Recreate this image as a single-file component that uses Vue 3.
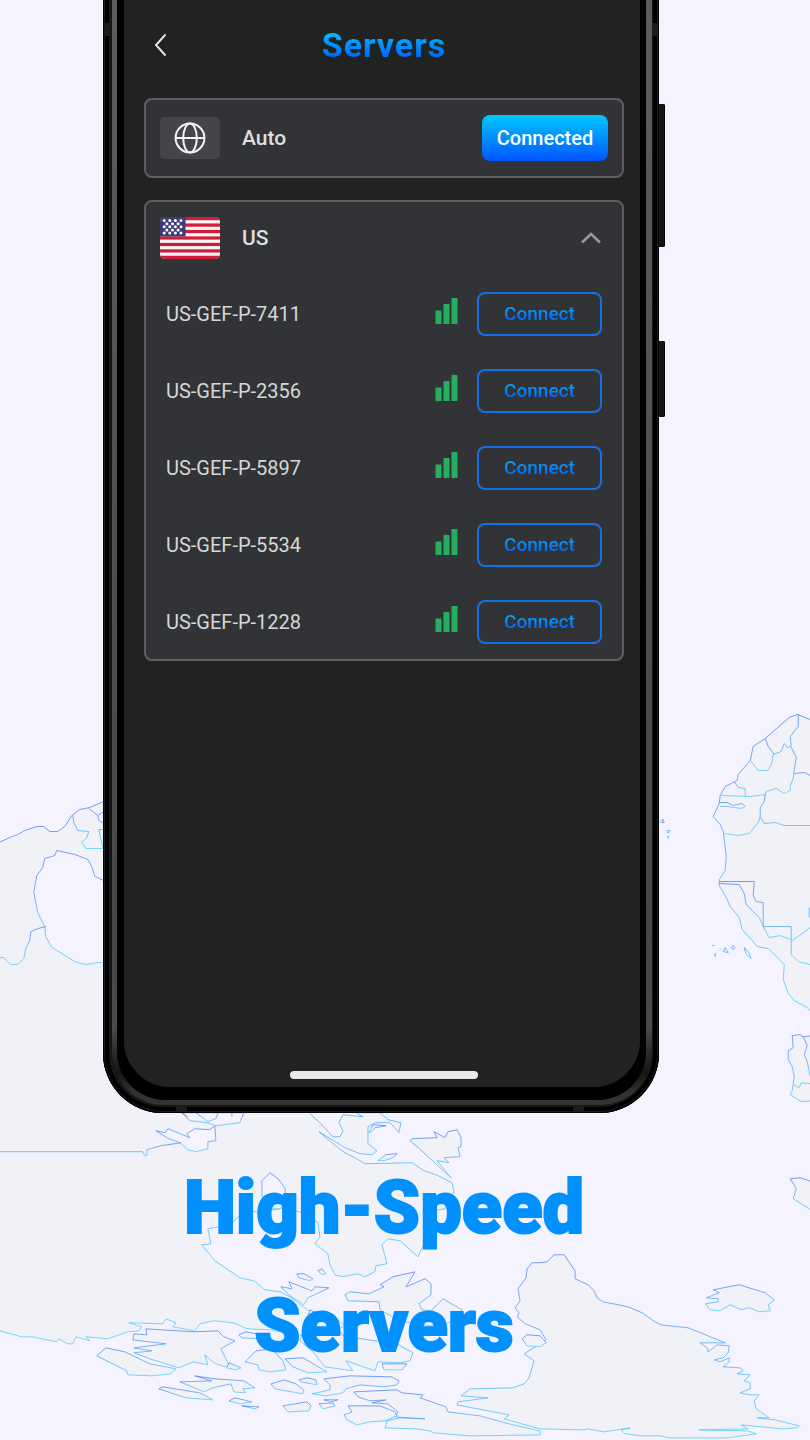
<script setup>
import { ref } from 'vue'

const open = ref(true)

const servers = [
    'US-GEF-P-7411',
    'US-GEF-P-2356',
    'US-GEF-P-5897',
    'US-GEF-P-5534',
    'US-GEF-P-1228'
]

// rows of the flag's canton, every second row is shifted
const stars = []
for (let row = 0; row < 5; row++) {
    const count = row % 2 ? 3 : 4
    for (let i = 0; i < count; i++) {
        stars.push({ x: (row % 2 ? 6.9 : 4.2) + i * 5.6, y: 3.6 + row * 3.1 })
    }
}

const land = [
    // big continent on the left
    'M-5 844 10 837 18 834 25 830 37 826 44 826 50 831 58 831 65 826 72 815 80 809 90 807 104 801 300 850 310 1113 320 1122 333 1136 340 1136 343 1130 339 1122 343 1114 363 1116 356 1112 380 1112 388 1119 401 1122 399 1132 390 1122 375 1122 368 1126 368 1143 377 1150 372 1154 360 1153 345 1147 319 1131 333 1143 345 1152 355 1157 365 1163 412 1162 424 1170 436 1174 452 1182 454 1191 445 1208 434 1210 430 1230 418 1256 400 1240 388 1238 382 1244 387 1263 376 1265 375 1271 365 1276 358 1273 342 1276 335 1274 330 1264 328 1253 315 1243 320 1236 318 1222 302 1212 286 1207 262 1211 244 1211 228 1226 220 1226 208 1228 211 1243 202 1244 215 1260 240 1277 254 1280 265 1289 280 1291 290 1296 309 1310 333 1315 345 1325 320 1338 270 1329 247 1328 234 1322 214 1320 200 1323 195 1330 173 1326 176 1322 166 1318 163 1323 129 1322 142 1326 139 1330 128 1331 108 1338 86 1336 90 1340 76 1336 73 1343 68 1343 59 1338 57 1341 32 1336 22 1336 0 1330-5 1329Z',
    // northern coast of africa, upside down
    'M815 721 797 714 789 717 765 738 753 746 750 760 738 774 737 780 725 786 720 795 719 803 713 816 720 824 723 831 726 855 725 870 719 879 719 885 726 897 730 906 739 917 742 929 752 940 757 946 768 948 784 964 783 979 788 993 794 1000 807 1007 815 1016Z',
    'M815 1035 803 1036 800 1034 792 1035 793 1047 788 1050 788 1059 792 1066 794 1076 792 1090 790 1094 801 1101 815 1100Z',
    'M815 1182 800 1177 790 1178 796 1188 793 1198 815 1212Z',
    'M739 1284 713 1289 719 1292 706 1297 718 1298 718 1301 705 1303 710 1309 720 1310 730 1304 741 1309 749 1307 759 1311 770 1310 768 1304 774 1299 765 1292Z',
    // the pole
    'M540 1262 532 1262 527 1268 526 1277 518 1288 520 1300 515 1307 519 1312 517 1316 525 1323 540 1329 546 1339 535 1346 524 1353 534 1360 529 1377 524 1383 513 1387 470 1388 461 1395 488 1397 458 1401 457 1404 509 1414 504 1418 540 1428 584 1429 588 1428 604 1431 630 1427 621 1429 625 1433 642 1435 660 1435 668 1437 727 1437 756 1433 748 1430 699 1429 748 1428 741 1424 782 1428 797 1427 799 1425 775 1419 757 1417 769 1417 756 1408 754 1400 759 1394 750 1394 740 1392 750 1388 750 1382 744 1380 750 1374 737 1373 743 1370 740 1367 723 1366 729 1361 729 1357 720 1361 714 1359 723 1357 728 1352 729 1345 717 1344 708 1351 707 1347 700 1342 725 1342 688 1327 661 1324 655 1321 642 1312 628 1306 603 1301 597 1297 594 1290 588 1284 575 1278 575 1270 564 1254 554 1254 547 1261Z',
    'M540 1335 527 1334 522 1338 527 1345 540 1346 546 1342Z',
    'M354 1391 397 1389 402 1392 423 1394 420 1397 446 1406 448 1411 480 1415 509 1423 540 1430 540 1434 470 1435 434 1432 430 1430 416 1428 385 1427 387 1420 400 1417 425 1418 395 1416 398 1411 388 1403 372 1402 386 1399 370 1400 358 1396Z',
    'M348 1405 380 1405 395 1411 397 1415 385 1420 370 1421 357 1424 347 1419 344 1414 352 1411Z',
    // islands under the caption
    'M146 1328 194 1331 218 1330 224 1336 235 1340 221 1348 229 1364 225 1366 214 1362 205 1354 208 1364 193 1361 179 1367 150 1358 134 1352 152 1350 134 1347 166 1343 133 1339 134 1333 147 1334Z',
    'M106 1347 125 1351 150 1363 176 1368 171 1373 152 1375 128 1374 127 1370 97 1355Z',
    'M195 1375 215 1378 244 1380 255 1387 243 1388 246 1392 234 1391 231 1383 213 1387 204 1391 180 1381 212 1380Z',
    'M159 1388 163 1386 200 1392 213 1399 186 1397Z',
    'M229 1362 241 1367 236 1369 227 1367Z',
    'M229 1400 235 1397 252 1401 240 1403Z',
    'M242 1405 259 1406 255 1408Z',
    'M239 1334 246 1331 262 1334 270 1342 260 1338 242 1337Z',
    'M245 1361 256 1350 272 1348 283 1360 286 1369 270 1371 259 1369 258 1364Z',
    'M285 1358 303 1357 310 1361 327 1371 308 1372 293 1366Z',
    'M310 1309 333 1320 343 1335 375 1340 395 1342 413 1352 410 1360 400 1362 378 1361 375 1370 346 1360 353 1370 325 1366 313 1351 300 1340Z',
    'M281 1286 292 1288 289 1281 312 1290 315 1286 329 1287 323 1290 308 1297 304 1304 290 1295Z',
    'M297 1273 304 1273 313 1278 310 1280 299 1277Z',
    'M318 1270 322 1268 326 1273 322 1274Z',
    'M345 1294 350 1291 369 1293 384 1286 380 1284 393 1276 415 1271 406 1286 425 1278 431 1283 431 1294 419 1303 422 1309 431 1310 443 1298 462 1309 449 1322 430 1325 400 1320 380 1309 379 1301 348 1300Z',
    'M382 1363 407 1363 402 1369 384 1369Z',
    'M324 1378 350 1375 392 1376 399 1380 397 1384 384 1386 360 1384 346 1388 343 1392 326 1395 312 1393 330 1389 330 1384Z',
    'M271 1383 284 1379 296 1383 304 1389 303 1393 275 1388Z',
    'M299 1379 307 1377 316 1379 317 1384 301 1381Z',
    'M283 1405 307 1401 311 1405 309 1410 288 1411Z',
    'M319 1403 333 1402 335 1405 323 1408Z',
    'M324 1399 338 1399 331 1401Z',
    'M410 1140 412 1138 437 1137 434 1131 445 1137 448 1131 457 1129 461 1137 461 1146 458 1147 460 1156 444 1157 449 1162 437 1160 451 1177 416 1145Z',
    'M378 1160 386 1154 397 1153 393 1157 384 1160Z',
    'M369 1132 373 1124 386 1125 375 1127 372 1131Z'
]

// seas and lakes cut out of the land
const water = [
    'M57 850 75 854 88 859 92 866 95 876 104 880 104 962 97 962 86 964 75 961 64 954 52 947 46 936 45 926 38 912 34 892 37 875 43 867 45 858 55 855Z',
    'M156 1130 165 1132 168 1128 190 1137 187 1133 195 1128 210 1129 215 1125 216 1140 208 1141 208 1148 196 1151 188 1149 180 1142 169 1138Z',
    'M262 1194 262 1180 270 1172 278 1178 285 1187 286 1200 280 1208 265 1208Z',
    'M182 1112 190 1120 207 1122 216 1125 240 1122 244 1112Z'
]

const borders = [
    'M0 957 4 957 11 964 18 964 24 958 26 948 30 940 31 931 38 928 46 926',
    'M73 815 74 822 78 830 89 831 87 837 82 842 86 848 104 848M89 808 98 815 104 811M98 815 99 820 104 823M104 829 99 829 103 847',
    'M0 1151 143 1151 145 1155 147 1155 147 1149 161 1145 175 1143 181 1142',
    'M182 1112 188 1116M196 1112 208 1121 216 1118 218 1112M232 1112 232 1116',
    'M798 714 798 726 790 736 791 746 787 747 784 743 781 751 773 754 771 764 768 770 758 770 750 760',
    'M765 738 768 746 774 754M791 747 796 757 794 770 793 778 790 785 790 790 784 793 776 788 766 791 765 794 750 796 721 795',
    'M794 773 804 772 810 775M734 781 738 787 745 788 745 796',
    'M765 794 764 801 760 807 760 816 758 822 749 833 738 835 724 833M760 816 764 823 775 822 784 825 810 825',
    'M719 802 727 802 733 805 742 803 745 806 741 808 733 807 727 806 720 806',
    'M719 881 754 881 753 895 756 901 763 902 763 926 791 926 791 954 798 961 810 964',
    'M719 883 739 884 744 893 746 904 759 917 765 930 769 937 780 935 791 939M791 941 810 927M809 917 809 907',
    'M803 1036 807 1045 804 1054 807 1061 810 1076M793 1084 799 1087 801 1082 810 1083',
    'M660 821 663 819 664 822 661 822ZM667 830 670 830 669 832 667 832ZM667 836 669 836 668 838Z',
    'M712 945 714 945M720 948 721 949M723 951 725 947 728 952ZM731 947 733 945 735 947 733 949ZM744 947 748 951 751 958 746 954ZM714 954 716 953 715 956Z'
]
</script>

<template>
    <main class="promo">
        <svg class="promo__map" viewBox="0 0 810 1440" preserveAspectRatio="xMidYMin slice" aria-hidden="true">
            <defs>
                <linearGradient id="coast" x1="0" y1="0" x2="0" y2="1">
                    <stop offset="0" stop-color="#3f74f5" />
                    <stop offset="1" stop-color="#3ccbf8" />
                </linearGradient>
            </defs>
            <path v-for="d in land" :key="d" :d="d" class="map-land" />
            <path v-for="d in water" :key="d" :d="d" class="map-water" />
            <path v-for="d in borders" :key="d" :d="d" class="map-border" />
        </svg>

        <div class="promo__inner">
            <div class="phone">
                <span class="phone__key phone__key--volume"></span>
                <span class="phone__key phone__key--power"></span>
                <div class="phone__frame">
                    <span class="phone__mark phone__mark--left"></span>
                    <span class="phone__mark phone__mark--right"></span>
                    <span class="phone__mark phone__mark--bottom-left"></span>
                    <span class="phone__mark phone__mark--bottom-right"></span>
                    <div class="phone__band">
                        <div class="phone__bezel">
                            <div class="screen">
                                <header class="topbar">
                                    <button class="topbar__back" type="button" aria-label="Back">
                                        <svg width="14" height="24" viewBox="0 0 14 24">
                                            <path d="M11.5 1.5 2 12 11.5 22.5" />
                                        </svg>
                                    </button>
                                    <h1 class="topbar__title">Servers</h1>
                                </header>

                                <section class="card">
                                    <div class="card__head">
                                        <span class="card__icon">
                                            <svg width="32" height="32" viewBox="0 0 32 32">
                                                <circle cx="16" cy="16" r="14.4" />
                                                <ellipse cx="16" cy="16" rx="6.8" ry="14.4" />
                                                <path d="M1.6 16H30.4" />
                                            </svg>
                                        </span>
                                        <span class="card__name">Auto</span>
                                        <button class="connected" type="button">Connected</button>
                                    </div>
                                </section>

                                <section class="card">
                                    <div class="card__head">
                                        <svg class="card__flag" viewBox="0 0 60 42">
                                            <rect width="60" height="42" fill="#f5f5f7" />
                                            <rect v-for="i in 7" :key="i" :y="(i - 1) * 6.46" width="60"
                                                height="3.23" fill="#d01c36" />
                                            <rect width="25.5" height="19.4" fill="#3c3b78" />
                                            <circle v-for="(s, i) in stars" :key="i" :cx="s.x" :cy="s.y" r="1.5"
                                                fill="#fff" />
                                        </svg>
                                        <span class="card__name">US</span>
                                        <button class="card__toggle" type="button" aria-label="Toggle US servers"
                                            :aria-expanded="open" @click="open = !open">
                                            <svg width="22" height="14" viewBox="0 0 22 14">
                                                <path d="M2 11.5 11 3 20 11.5" />
                                            </svg>
                                        </button>
                                    </div>
                                    <ul v-if="open" class="servers">
                                        <li v-for="name in servers" :key="name" class="servers__row">
                                            <span class="servers__name">{{ name }}</span>
                                            <svg class="servers__signal" width="24" height="32" viewBox="0 0 24 32">
                                                <rect x="0.5" y="12.5" width="6" height="13.5" rx="0.6" />
                                                <rect x="8.5" y="6" width="6" height="20" rx="0.6" />
                                                <rect x="16.5" y="0" width="6" height="26" rx="0.6" />
                                            </svg>
                                            <button class="connect" type="button"><span>Connect</span></button>
                                        </li>
                                    </ul>
                                </section>

                                <div class="screen__home"></div>
                            </div>
                        </div>
                    </div>
                </div>
            </div>

            <h2 class="promo__caption">High-Speed<br>Servers</h2>
        </div>
    </main>
</template>

<style>
body {
    margin: 0;
    background: #f5f3ff;
}
</style>

<style scoped>
.promo {
    position: relative;
    overflow: hidden;
    min-height: 100vh;
    font-family: Roboto, "Liberation Sans", sans-serif;
    background: #f5f3ff;
}

.promo__map {
    position: absolute;
    top: 0;
    left: 0;
    width: 100%;
    height: 100%;
}

.map-land,
.map-water,
.map-border {
    stroke: url(#coast);
    stroke-width: 0.7;
    stroke-linejoin: round;
}

.map-land {
    fill: #f1f2f8;
}

.map-water {
    fill: #f5f3ff;
}

.map-border {
    fill: none;
}

.promo__inner {
    position: relative;
    margin: 0 145px 0 103px;
}

.promo__caption {
    margin: 36px 0 56px;
    font-size: 74px;
    line-height: 118px;
    font-weight: 900;
    text-align: center;
    color: #0091ff;
    -webkit-text-stroke: 2px #0091ff;
}

/* phone body, its top edge runs out of the page */
.phone {
    position: relative;
    margin-top: -12px;
    padding-right: 6px;
}

.phone__key {
    position: absolute;
    right: 0;
    width: 10px;
    background: #141311;
    border-radius: 2px;
    box-shadow: inset -1px 0 0 #000;
}

.phone__key--volume {
    top: 116px;
    height: 143px;
}

.phone__key--power {
    top: 353px;
    height: 76px;
}

.phone__frame {
    position: relative;
    padding: 12px 7px 8px 9px;
    border-radius: 0 0 60px 60px;
    background: #161616;
    box-shadow: inset 0 0 0 1px #000, inset 0 0 0 2px #1a1a1a, inset 0 0 0 6px #000;
}

.phone__mark {
    position: absolute;
    background: #1b1b1b;
}

.phone__mark--left,
.phone__mark--right {
    top: 35px;
    width: 5px;
    height: 13px;
}

.phone__mark--left {
    left: 2px;
}

.phone__mark--right {
    right: 2px;
}

.phone__mark--bottom-left,
.phone__mark--bottom-right {
    bottom: 2px;
    width: 11px;
    height: 5px;
}

.phone__mark--bottom-left {
    left: 73px;
}

.phone__mark--bottom-right {
    right: 75px;
}

.phone__band {
    padding: 0 6px 5px 5px;
    border-radius: 0 0 52px 52px;
    background: linear-gradient(#5c5c5c, #464646 85%, #4a4a4a 93%, #151515 97%, #333 99%);
}

.phone__bezel {
    padding: 0 6px 13px 7px;
    border-radius: 0 0 48px 48px;
    background: #000;
}

.screen {
    display: flex;
    flex-direction: column;
    gap: 22px;
    box-sizing: border-box;
    aspect-ratio: 47 / 99;
    padding: 0 16px 8px 20px;
    border-radius: 0 0 46px 46px;
    background: #212322;
}

.screen__home {
    width: 188px;
    height: 8px;
    margin: auto auto 0;
    border-radius: 4px;
    background: #e8e8e8;
}

.topbar {
    display: grid;
    grid-template-columns: 60px 1fr 60px;
    align-items: center;
    box-sizing: border-box;
    height: 76px;
    padding-top: 14px;
}

button {
    padding: 0;
    border: 0;
    background: none;
    font: inherit;
    cursor: pointer;
}

.topbar__back {
    display: flex;
    padding-left: 10px;
}

.topbar__back path {
    fill: none;
    stroke: #e4e4e4;
    stroke-width: 2;
}

.topbar__title {
    margin: 0;
    font-size: 34px;
    line-height: 40px;
    font-weight: 700;
    letter-spacing: 1px;
    text-align: center;
    color: transparent;
    background: linear-gradient(#00c2ff 15%, #0059ff 90%);
    background-clip: text;
}

/* server cards */
.card {
    border: 2px solid #5e5f61;
    border-radius: 8px;
    background: #323336;
}

.card__head {
    display: flex;
    align-items: center;
    height: 76px;
    padding: 0 14px;
}

.card__head:not(:last-child) {
    height: 72px;
}

.card__icon {
    display: flex;
    align-items: center;
    justify-content: center;
    width: 60px;
    height: 42px;
    border-radius: 5px;
    background: #444548;
}

.card__icon svg {
    fill: none;
    stroke: #f4f4f4;
    stroke-width: 2;
}

.card__flag {
    width: 60px;
    height: 42px;
    border-radius: 5px;
}

.card__name {
    flex: 1;
    padding-left: 22px;
    font-size: 21px;
    font-weight: 500;
    color: #dedfe0;
}

.connected {
    width: 126px;
    height: 46px;
    border-radius: 8px;
    background: linear-gradient(#00c8ff, #0055ff);
    font-size: 20px;
    font-weight: 500;
    color: #fff;
}

.card__toggle {
    display: flex;
    padding: 6px;
}

.card__toggle path {
    fill: none;
    stroke: #97989a;
    stroke-width: 2.6;
}

.servers {
    display: flex;
    flex-direction: column;
    gap: 33px;
    margin: 0;
    padding: 18px 20px 15px;
    list-style: none;
}

.servers__row {
    display: flex;
    align-items: center;
}

.servers__name {
    flex: 1;
    font-size: 20px;
    color: #d6d7d8;
}

.servers__signal {
    margin-right: 18px;
    fill: #25ae60;
}

.connect {
    width: 125px;
    height: 44px;
    border: 2px solid #1570e6;
    border-radius: 8px;
    font-size: 19px;
    line-height: 22px;
    font-weight: 500;
}

.connect span {
    color: transparent;
    background: linear-gradient(#00c2ff, #0062ff 85%);
    background-clip: text;
}
</style>
